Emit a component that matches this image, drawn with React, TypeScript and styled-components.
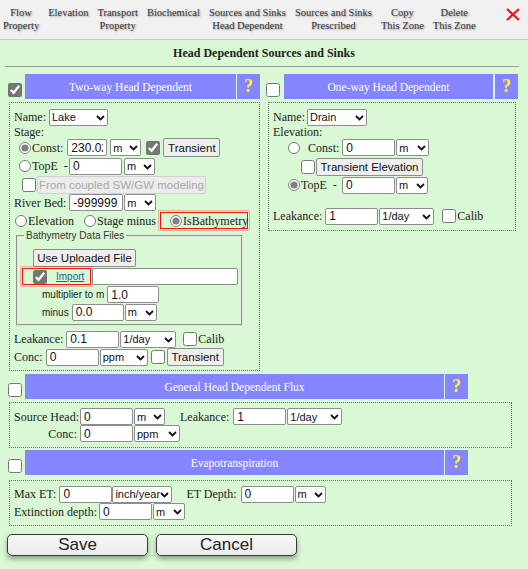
import React from 'react'
import styled, { createGlobalStyle } from 'styled-components'

const GlobalStyle = createGlobalStyle`
  html, body {
    margin: 0;
    padding: 0;
    background: #d9f8d4;
  }
  body {
    font-family: "Liberation Serif", "Times New Roman", serif;
    font-size: 12px;
    color: #222;
  }
`

const Page = styled.div`
  width: 528px;
  min-height: 569px;
  background: #d9f8d4;
`

const Toolbar = styled.nav`
  display: flex;
  align-items: flex-start;
  gap: 9px;
  height: 40px;
  box-sizing: border-box;
  padding: 6px 0 0 3px;
  background: #f1f1f1;
  border-bottom: 1px solid #c9c9c9;
`

const ToolItem = styled.div`
  font-size: 10.5px;
  line-height: 13px;
  text-align: center;
  color: #333;
  text-shadow: 1px 1px 2px #999;
  white-space: nowrap;
  cursor: pointer;
`

const CloseIcon = styled.svg`
  margin: 2px 8px 0 auto;
  cursor: pointer;
`

const Title = styled.h1`
  margin: 0;
  height: 26px;
  display: flex;
  align-items: center;
  justify-content: center;
  font-size: 12px;
  font-weight: bold;
  color: #222;
`

const Rule = styled.hr`
  margin: 0 9px 0 5px;
  border: 0;
  border-top: 1px solid #9c9c9c;
  border-bottom: 1px solid #ececec;
`

const Content = styled.main`
  padding: 6px 10px 0 8px;
`

const Columns = styled.div`
  display: grid;
  grid-template-columns: 252px 252px;
  gap: 6px;
  align-items: start;
`

const Section = styled.section<{ $mt?: number }>`
  margin-top: ${p => p.$mt ?? 0}px;
`

const SectionHead = styled.div<{ $w?: number; $gap?: number }>`
  display: flex;
  height: 25px;
  width: ${p => (p.$w ? `${p.$w}px` : 'auto')};
  gap: ${p => p.$gap ?? 1}px;
`

const HeadBar = styled.div`
  flex: 1;
  margin-left: 2px;
  display: flex;
  align-items: center;
  justify-content: center;
  background: #8585ff;
  color: #fff;
  font-size: 11.5px;
`

const HelpMark = styled.div`
  width: 23px;
  display: flex;
  align-items: center;
  justify-content: center;
  background: #8585ff;
  color: #ffff00;
  font-size: 18px;
  font-weight: bold;
  cursor: help;
`

const Box = styled.div<{ $ml?: number; $mr?: number; $mt?: number; $pb?: number; $w?: number }>`
  width: ${p => (p.$w ? `${p.$w}px` : 'auto')};
  margin: ${p => p.$mt ?? 3}px ${p => p.$mr ?? 0}px 0 ${p => p.$ml ?? 1}px;
  padding: 4px 0 ${p => p.$pb ?? 4}px 4px;
  border: 1px dotted #6c6c6c;
`

const Row = styled.div<{ $h: number; $pl?: number; $mt?: number }>`
  display: flex;
  align-items: center;
  height: ${p => p.$h}px;
  margin-top: ${p => p.$mt ?? 0}px;
  padding-left: ${p => p.$pl ?? 0}px;
  white-space: nowrap;
`

const Text = styled.span<{ $ml?: number; $w?: number; $right?: boolean }>`
  margin-left: ${p => p.$ml ?? 0}px;
  width: ${p => (p.$w ? `${p.$w}px` : 'auto')};
  text-align: ${p => (p.$right ? 'right' : 'left')};
  line-height: 12px;
  flex-shrink: 0;
`

const SmallText = styled.span<{ $ml?: number }>`
  margin-left: ${p => p.$ml ?? 0}px;
  font-family: "Liberation Sans", Arial, sans-serif;
  font-size: 10px;
  color: #222;
`

const Field = styled.input<{ $w: number; $ml?: number }>`
  box-sizing: border-box;
  width: ${p => p.$w}px;
  height: 17px;
  margin: 0 0 0 ${p => p.$ml ?? 0}px;
  padding: 0 3px;
  border: 1px solid #8d8d8d;
  border-radius: 2px;
  background: #fff;
  font-family: "Liberation Sans", Arial, sans-serif;
  font-size: 12px;
  color: #111;
`

const PickWrap = styled.span<{ $w: number; $ml?: number }>`
  position: relative;
  display: inline-flex;
  flex-shrink: 0;
  width: ${p => p.$w}px;
  margin-left: ${p => p.$ml ?? 0}px;
`

const Picker = styled.select`
  appearance: none;
  box-sizing: border-box;
  width: 100%;
  height: 17px;
  margin: 0;
  padding: 0 0 0 2px;
  border: 1px solid #8d8d8d;
  border-radius: 2px;
  background: #fff;
  font-family: "Liberation Sans", Arial, sans-serif;
  font-size: 11px;
  color: #111;
`

const Chevron = styled.svg`
  position: absolute;
  right: 3px;
  top: 6px;
  pointer-events: none;
`

const Btn = styled.button<{ $w: number; $h?: number; $ml?: number }>`
  box-sizing: border-box;
  width: ${p => p.$w}px;
  height: ${p => p.$h ?? 18}px;
  margin: 0 0 0 ${p => p.$ml ?? 0}px;
  padding: 0;
  border: 1px solid #8d8d8d;
  border-radius: 2px;
  background: #efefef;
  font-family: "Liberation Sans", Arial, sans-serif;
  font-size: 11.5px;
  color: #111;

  &:disabled {
    border-color: #d0d0d0;
    background: #ececec;
    color: #a8a8a8;
  }
`

const Check = styled.input.attrs({ type: 'checkbox' })<{ $ml?: number }>`
  width: 14px;
  height: 14px;
  margin: 0 0 0 ${p => p.$ml ?? 0}px;
  accent-color: #767676;
  flex-shrink: 0;
`

const HeadCheck = styled(Check)`
  align-self: flex-end;
  margin-bottom: 2px;
`

const Radio = styled.input.attrs({ type: 'radio' })<{ $ml?: number }>`
  width: 12px;
  height: 12px;
  margin: 0 0 0 ${p => p.$ml ?? 0}px;
  accent-color: #808080;
  flex-shrink: 0;
`

const Marked = styled.div<{ $w: number; $ml?: number }>`
  display: flex;
  align-items: center;
  flex-shrink: 0;
  box-sizing: border-box;
  width: ${p => p.$w}px;
  height: 19px;
  margin-left: ${p => p.$ml ?? 0}px;
  border: 1px solid transparent;
  box-shadow: inset 0 0 0 1px #ee1111, 0 0 0 0.5px rgba(238, 17, 17, 0.6);
`

const FileSet = styled.fieldset`
  width: 225px;
  box-sizing: border-box;
  margin: 0 0 0 2px;
  padding: 0 3px 3px 3px;
  border: 2px groove #e4e4e4;
`

const Legend = styled.legend`
  padding: 0 2px;
  margin-left: 3px;
  font-family: "Liberation Sans", Arial, sans-serif;
  font-size: 10px;
  line-height: 11px;
  color: #333;
`

const ImportLink = styled.a`
  margin-left: 9px;
  font-family: "Liberation Sans", Arial, sans-serif;
  font-size: 10px;
  color: #2457b0;
  text-decoration: underline;
`

const Footer = styled.div`
  display: flex;
  gap: 8px;
  margin: 8px 0 0 -1px;
`

const BigButton = styled.button`
  width: 141px;
  height: 22px;
  padding: 0;
  border: 1px solid #3a3a3a;
  border-radius: 5px;
  background: linear-gradient(#f7f7f7, #ebebeb);
  box-shadow: 0 3px 5px rgba(0, 0, 0, 0.35);
  font-family: "Liberation Sans", Arial, sans-serif;
  font-size: 17px;
  color: #222;
`

const tools: [string, string?][] = [
  ['Flow', 'Property'],
  ['Elevation'],
  ['Transport', 'Property'],
  ['Biochemical'],
  ['Sources and Sinks', 'Head Dependent'],
  ['Sources and Sinks', 'Prescribed'],
  ['Copy', 'This Zone'],
  ['Delete', 'This Zone'],
]

const Unit: React.FC<{ w: number; ml?: number; value: string; options?: string[] }> = ({ w, ml, value, options }) => (
  <PickWrap $w={w} $ml={ml}>
    <Picker defaultValue={value}>
      {(options ?? [value]).map(o => (
        <option key={o}>{o}</option>
      ))}
    </Picker>
    <Chevron width="9" height="6" viewBox="0 0 9 6">
      <path d="M1 1 L4.5 4.5 L8 1" stroke="#111" strokeWidth="1.8" fill="none" />
    </Chevron>
  </PickWrap>
)

const Head: React.FC<{ title: string; checked?: boolean; w?: number; gap?: number }> = ({ title, checked, w, gap }) => (
  <SectionHead $w={w} $gap={gap}>
    <HeadCheck defaultChecked={checked} />
    <HeadBar>{title}</HeadBar>
    <HelpMark>?</HelpMark>
  </SectionHead>
)

const App: React.FC = () => {
  return (
    <Page>
      <GlobalStyle />
      <Toolbar>
        {tools.map(([a, b]) => (
          <ToolItem key={a + b}>
            {a}
            {b && <br />}
            {b}
          </ToolItem>
        ))}
        <CloseIcon width="14" height="13" viewBox="0 0 14 13">
          <path d="M1 1 L13 12 M13 1 L1 12" stroke="#e8141c" strokeWidth="2.2" fill="none" />
        </CloseIcon>
      </Toolbar>

      <Title>Head Dependent Sources and Sinks</Title>
      <Rule />

      <Content>
        <Columns>
          {/* two-way: lake / river */}
          <Section>
            <Head title="Two-way Head Dependent" checked />
            <Box>
              <Row $h={18} $mt={1}>
                <Text>Name:</Text>
                <Unit w={59} ml={3} value="Lake" options={['Lake', 'River']} />
              </Row>
              <Row $h={12}>
                <Text>Stage:</Text>
              </Row>
              <Row $h={19} $pl={5}>
                <Radio name="stage" defaultChecked />
                <Text $ml={1}>Const:</Text>
                <Field $w={40} $ml={4} defaultValue="230.025" />
                <Unit w={31} ml={3} value="m" />
                <Check $ml={5} defaultChecked />
                <Btn $w={57} $h={19} $ml={3}>Transient</Btn>
              </Row>
              <Row $h={18} $pl={5}>
                <Radio name="stage" />
                <Text $ml={1} $w={34}>TopE&nbsp;&nbsp;-</Text>
                <Field $w={53} $ml={3} defaultValue="0" />
                <Unit w={31} ml={2} value="m" />
              </Row>
              <Row $h={19} $pl={8}>
                <Check />
                <Btn $w={169} $ml={1} disabled>From coupled SW/GW modeling</Btn>
              </Row>
              <Row $h={17}>
                <Text>River Bed:</Text>
                <Field $w={54} $ml={3} defaultValue="-999999" />
                <Unit w={32} ml={1} value="m" />
              </Row>
              <Row $h={19} $pl={1}>
                <Radio name="bed" />
                <Text $ml={1}>Elevation</Text>
                <Radio name="bed" $ml={10} />
                <Text $ml={1}>Stage minus</Text>
                <Marked $w={90} $ml={3}>
                  <Radio name="bed" $ml={10} defaultChecked />
                  <Text $ml={1}>IsBathymetry</Text>
                </Marked>
              </Row>
              <FileSet>
                <Legend>Bathymetry Data Files</Legend>
                <Row $h={18} $mt={8}>
                  <Btn $w={103} $ml={12}>Use Uploaded File</Btn>
                </Row>
                <Row $h={19}>
                  <Marked $w={71}>
                    <Check $ml={11} defaultChecked />
                    <ImportLink href="#import">Import</ImportLink>
                  </Marked>
                  <Field $w={146} />
                </Row>
                <Row $h={17} $pl={21}>
                  <SmallText>multiplier to m</SmallText>
                  <Field $w={52} $ml={3} defaultValue="1.0" />
                </Row>
                <Row $h={18} $pl={21}>
                  <SmallText>minus</SmallText>
                  <Field $w={52} $ml={3} defaultValue="0.0" />
                  <Unit w={32} ml={1} value="m" />
                </Row>
              </FileSet>
              <Row $h={18} $mt={4}>
                <Text>Leakance:</Text>
                <Field $w={53} $ml={3} defaultValue="0.1" />
                <Unit w={56} ml={1} value="1/day" />
                <Check $ml={7} />
                <Text $ml={1}>Calib</Text>
              </Row>
              <Row $h={18}>
                <Text>Conc:</Text>
                <Field $w={53} $ml={3} defaultValue="0" />
                <Unit w={48} ml={1} value="ppm" />
                <Check $ml={3} />
                <Btn $w={57} $ml={2}>Transient</Btn>
              </Row>
            </Box>
          </Section>

          {/* one-way: drain */}
          <Section>
            <Head title="One-way Head Dependent" gap={2} />
            <Box $ml={2} $mr={2} $pb={5}>
              <Row $h={18} $mt={1}>
                <Text>Name:</Text>
                <Unit w={60} ml={2} value="Drain" options={['Drain', 'Spring']} />
              </Row>
              <Row $h={12}>
                <Text>Elevation:</Text>
              </Row>
              <Row $h={19} $pl={15}>
                <Radio name="drain" />
                <Text $ml={8}>Const:</Text>
                <Field $w={53} $ml={3} defaultValue="0" />
                <Unit w={33} ml={1} value="m" />
              </Row>
              <Row $h={19} $pl={28}>
                <Check />
                <Btn $w={107} $ml={1}>Transient Elevation</Btn>
              </Row>
              <Row $h={18} $pl={15}>
                <Radio name="drain" defaultChecked />
                <Text $ml={1} $w={38}>TopE&nbsp;&nbsp;-</Text>
                <Field $w={53} $ml={3} defaultValue="0" />
                <Unit w={32} ml={1} value="m" />
              </Row>
              <Row $h={18} $mt={13}>
                <Text>Leakance:</Text>
                <Field $w={53} $ml={3} defaultValue="1" />
                <Unit w={55} ml={1} value="1/day" />
                <Check $ml={8} />
                <Text $ml={1}>Calib</Text>
              </Row>
            </Box>
          </Section>
        </Columns>

        <Section $mt={3}>
          <Head title="General Head Dependent Flux" w={460} />
          <Box $pb={5} $w={497}>
            <Row $h={17} $mt={1}>
              <Text $w={63} $right>Source Head:</Text>
              <Field $w={53} $ml={3} defaultValue="0" />
              <Unit w={31} ml={1} value="m" />
              <Text $ml={15}>Leakance:</Text>
              <Field $w={53} $ml={4} defaultValue="1" />
              <Unit w={55} ml={1} value="1/day" />
            </Row>
            <Row $h={17}>
              <Text $w={63} $right>Conc:</Text>
              <Field $w={53} $ml={3} defaultValue="0" />
              <Unit w={46} ml={1} value="ppm" />
            </Row>
          </Box>
        </Section>

        <Section $mt={2}>
          <Head title="Evapotranspiration" w={460} />
          <Box $mt={5} $pb={5} $w={497}>
            <Row $h={18}>
              <Text>Max ET:</Text>
              <Field $w={53} $ml={3} defaultValue="0" />
              <Unit w={60} value="inch/year" />
              <Text $ml={14}>ET Depth:</Text>
              <Field $w={53} $ml={4} defaultValue="0" />
              <Unit w={31} ml={1} value="m" />
            </Row>
            <Row $h={17}>
              <Text>Extinction depth:</Text>
              <Field $w={53} $ml={2} defaultValue="0" />
              <Unit w={32} ml={1} value="m" />
            </Row>
          </Box>
        </Section>

        <Footer>
          <BigButton>Save</BigButton>
          <BigButton>Cancel</BigButton>
        </Footer>
      </Content>
    </Page>
  )
}

export default App
